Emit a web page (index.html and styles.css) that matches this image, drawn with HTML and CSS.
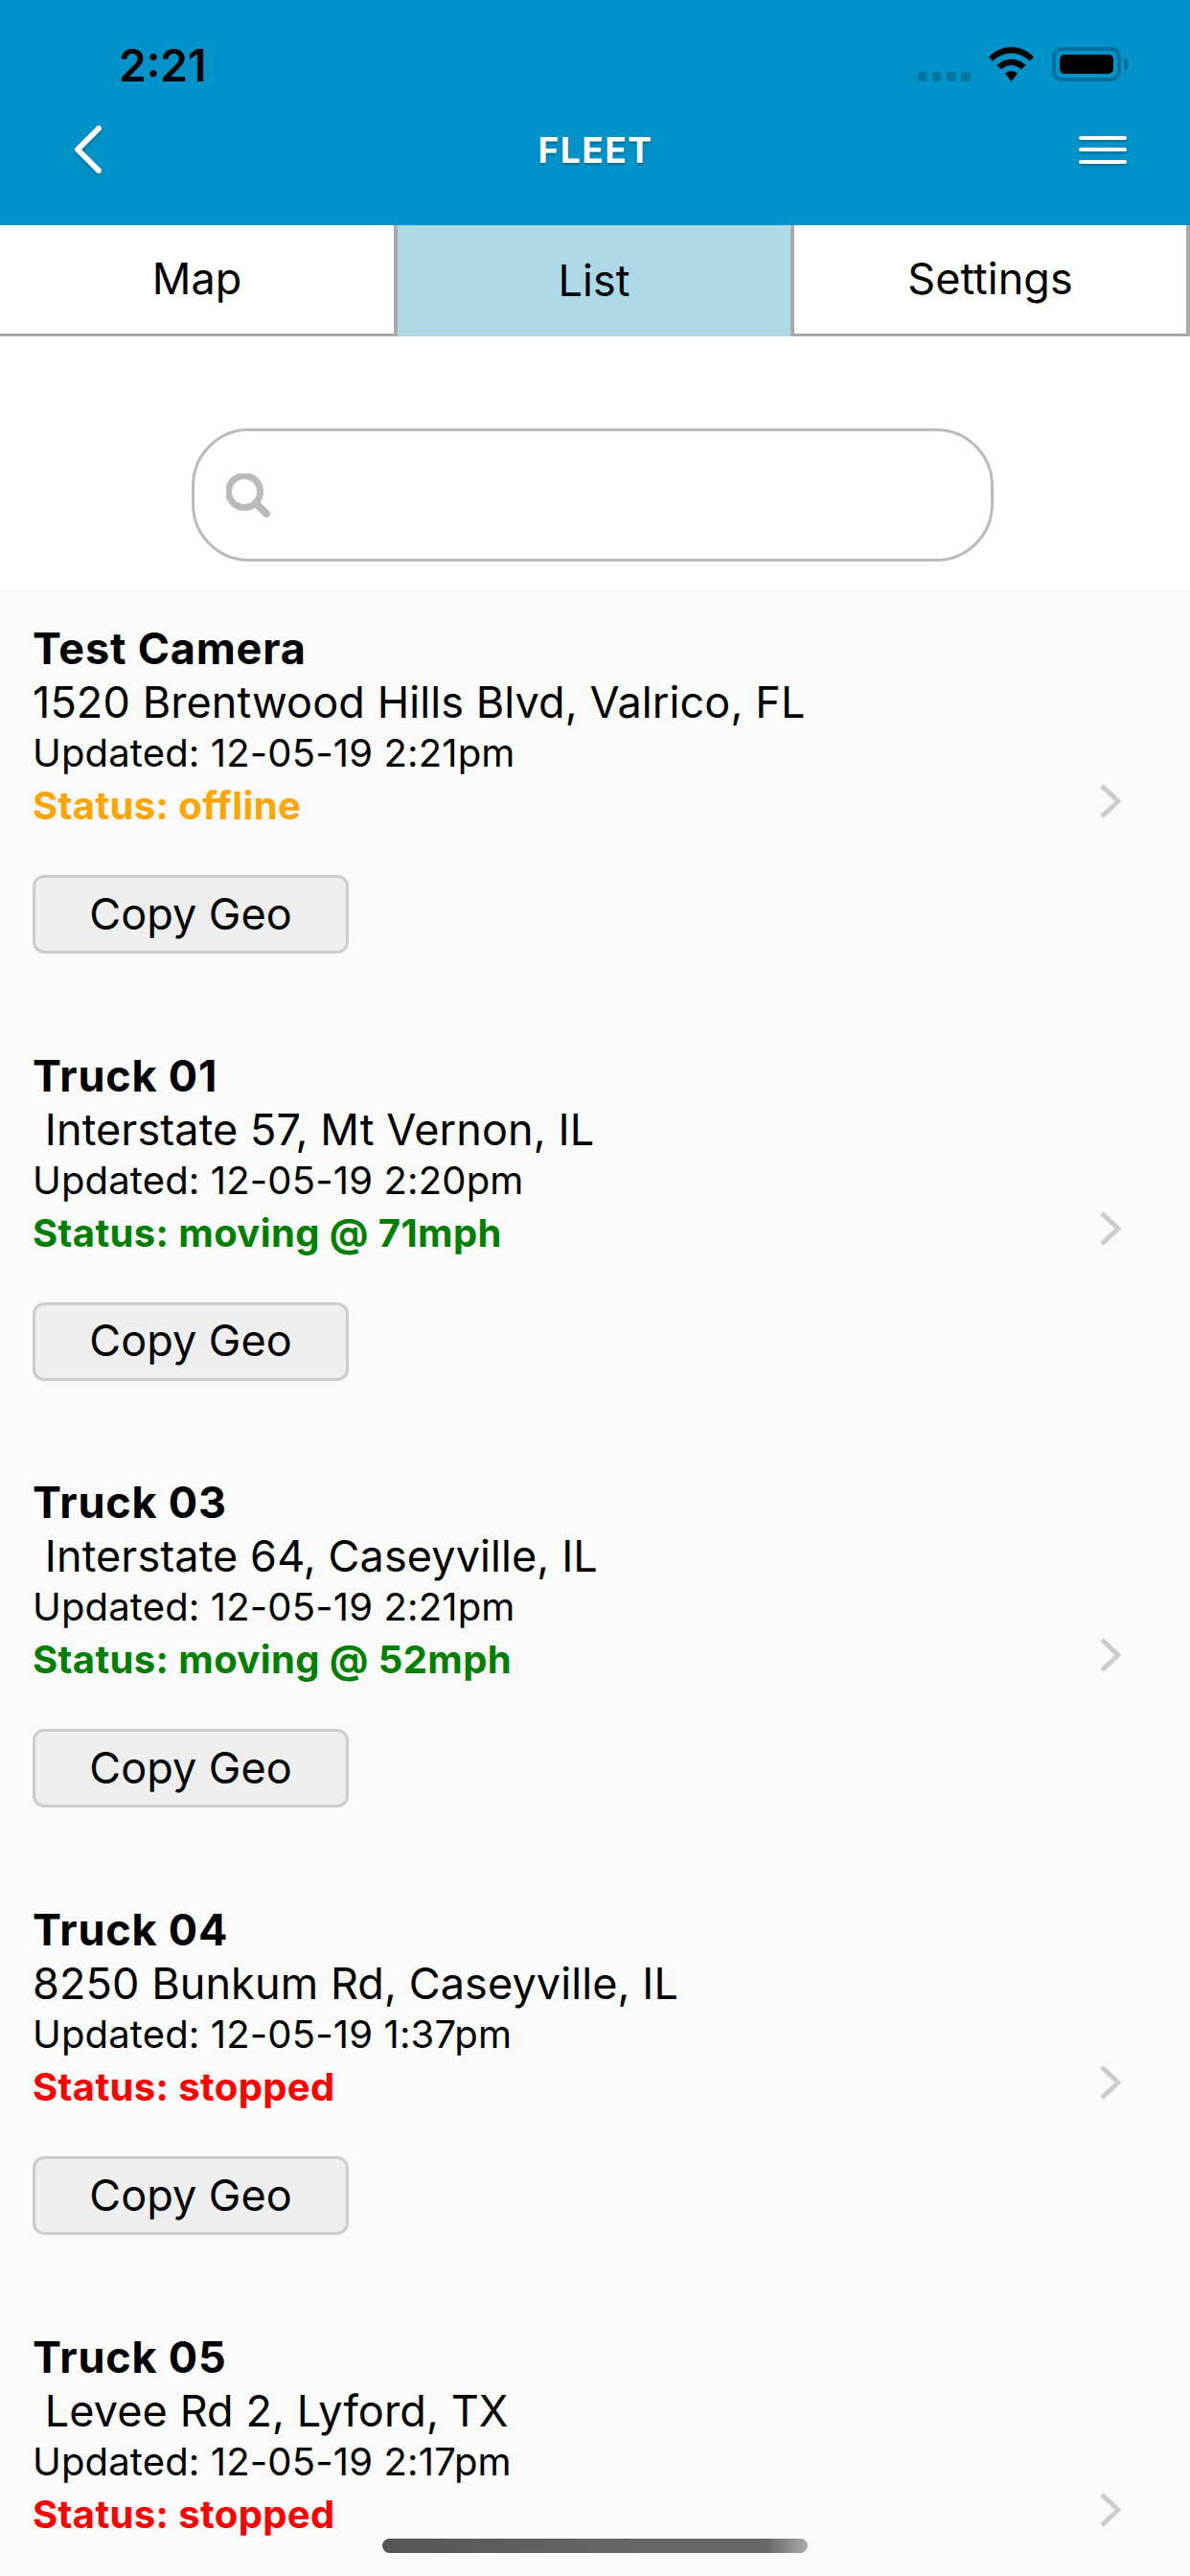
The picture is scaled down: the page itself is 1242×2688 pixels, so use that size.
FILE: index.html
```html
<!DOCTYPE html>
<html lang="en">
<head>
  <meta charset="UTF-8">
  <meta name="viewport" content="width=device-width, initial-scale=1.0">
  <title>Fleet</title>
  <link rel="stylesheet" href="styles.css">
</head>
<body>
  <div class="screen">
    <header class="header">
      <div class="status-bar">
        <span class="time">2:21</span>
        <div class="status-icons">
          <div class="signal"><i></i><i></i><i></i><i></i></div>
          <svg class="wifi" width="47" height="36" viewBox="0 0 47 36">
            <path d="M0 10.500C13.500 -3.500 33.500 -3.500 47 10.500L42.800 14.800C31.500 3.800 15.500 3.800 4.200 14.800Z"/>
            <path d="M8.500 19C17 10.500 30 10.500 38.500 19L34 23.500C27.500 17.500 19.500 17.500 13 23.500Z"/>
            <path d="M17 27.500C21 24.500 26 24.500 30 27.500L23.500 36Z"/>
          </svg>
          <div class="battery"><div class="battery-fill"></div></div>
          <div class="battery-nub"></div>
        </div>
      </div>
      <nav class="nav-bar">
        <svg class="back" width="34" height="52" viewBox="0 0 34 52">
          <path d="M28 4L6 26L28 48" fill="none" stroke="#fff" stroke-width="6" stroke-linecap="round" stroke-linejoin="round"/>
        </svg>
        <span class="nav-title">FLEET</span>
        <div class="menu"><i></i><i></i><i></i></div>
      </nav>
    </header>

    <div class="tabs">
      <div class="tab">Map</div>
      <div class="tab active">List</div>
      <div class="tab">Settings</div>
    </div>

    <div class="search-wrap">
      <div class="search">
        <svg width="48" height="48" viewBox="0 0 48 48">
          <circle cx="19" cy="19" r="16.500" fill="none" stroke="#bbb" stroke-width="7"/>
          <path d="M31 31L42 42" stroke="#bbb" stroke-width="8" stroke-linecap="round"/>
        </svg>
      </div>
    </div>

    <div class="list">
      <div class="item">
        <div class="info">
          <div class="name">Test Camera</div>
          <div class="address">1520 Brentwood Hills Blvd, Valrico, FL</div>
          <div class="updated">Updated: 12-05-19 2:21pm</div>
          <div class="state offline">Status: offline</div>
          <button class="copy">Copy Geo</button>
        </div>
        <svg class="chevron" width="24" height="36" viewBox="0 0 24 36"><path d="M3 2L20 18L3 34" fill="none" stroke="#ccc" stroke-width="5"/></svg>
      </div>
      <div class="item">
        <div class="info">
          <div class="name">Truck 01</div>
          <div class="address">&nbsp;Interstate 57, Mt Vernon, IL</div>
          <div class="updated">Updated: 12-05-19 2:20pm</div>
          <div class="state moving">Status: moving @ 71mph</div>
          <button class="copy">Copy Geo</button>
        </div>
        <svg class="chevron" width="24" height="36" viewBox="0 0 24 36"><path d="M3 2L20 18L3 34" fill="none" stroke="#ccc" stroke-width="5"/></svg>
      </div>
      <div class="item">
        <div class="info">
          <div class="name">Truck 03</div>
          <div class="address">&nbsp;Interstate 64, Caseyville, IL</div>
          <div class="updated">Updated: 12-05-19 2:21pm</div>
          <div class="state moving">Status: moving @ 52mph</div>
          <button class="copy">Copy Geo</button>
        </div>
        <svg class="chevron" width="24" height="36" viewBox="0 0 24 36"><path d="M3 2L20 18L3 34" fill="none" stroke="#ccc" stroke-width="5"/></svg>
      </div>
      <div class="item">
        <div class="info">
          <div class="name">Truck 04</div>
          <div class="address">8250 Bunkum Rd, Caseyville, IL</div>
          <div class="updated">Updated: 12-05-19 1:37pm</div>
          <div class="state stopped">Status: stopped</div>
          <button class="copy">Copy Geo</button>
        </div>
        <svg class="chevron" width="24" height="36" viewBox="0 0 24 36"><path d="M3 2L20 18L3 34" fill="none" stroke="#ccc" stroke-width="5"/></svg>
      </div>
      <div class="item">
        <div class="info">
          <div class="name">Truck 05</div>
          <div class="address">&nbsp;Levee Rd 2, Lyford, TX</div>
          <div class="updated">Updated: 12-05-19 2:17pm</div>
          <div class="state stopped">Status: stopped</div>
        </div>
        <svg class="chevron" width="24" height="36" viewBox="0 0 24 36"><path d="M3 2L20 18L3 34" fill="none" stroke="#ccc" stroke-width="5"/></svg>
      </div>
    </div>

    <div class="home-bar"></div>
  </div>
</body>
</html>
```

FILE: styles.css
```css
* {
  box-sizing: border-box;
}
body {
  margin: 0;
  font-family: Inter, "Liberation Sans", sans-serif;
  color: #000;
  background: #fff;
}
.screen {
  position: relative;
  width: 1242px;
  height: 2688px;
  overflow: hidden;
}

/* header */
.header {
  height: 235px;
  background: #0093c9;
}
.status-bar {
  height: 112px;
  padding: 44px 65px 0 124px;
  display: flex;
  justify-content: space-between;
  align-items: flex-start;
}
.time {
  font-size: 46px;
  line-height: 48px;
  font-weight: 600;
}
.status-icons {
  display: flex;
  align-items: flex-start;
  padding-top: 5px;
}
.signal {
  display: flex;
  gap: 5px;
  margin-top: 26px;
  margin-right: 19px;
}
.signal i {
  width: 10px;
  height: 10px;
  border-radius: 3px;
  background: #00759f;
}
.wifi {
  margin-right: 19px;
}
.battery {
  width: 72px;
  height: 36px;
  padding: 6px;
  border: 2px solid #006f99;
  border-radius: 10px;
  box-shadow: inset 0 0 0 2px #006f99;
}
.battery-fill {
  height: 100%;
  border-radius: 5px;
  background: #000;
}
.battery-nub {
  width: 4px;
  height: 12px;
  margin: 12px 0 0 3px;
  border-radius: 0 4px 4px 0;
  background: #006f99;
}
.nav-bar {
  padding: 0 66px 0 75px;
  display: flex;
  justify-content: space-between;
  align-items: center;
  height: 88px;
}
.back {
  filter: drop-shadow(0 2px 2px rgba(0,0,0,0.25));
}
.nav-title {
  margin-left: 8px;
  font-size: 37px;
  font-weight: 700;
  letter-spacing: 1.500px;
  color: #fff;
  text-shadow: 0 2px 3px rgba(0,0,0,0.3);
}
.menu {
  width: 50px;
  display: flex;
  flex-direction: column;
  gap: 8.500px;
}
.menu i {
  height: 4px;
  border-radius: 2px;
  background: #fff;
  box-shadow: 0 2px 3px rgba(0,0,0,0.25);
}

/* tabs */
.tabs {
  display: grid;
  grid-template-columns: 415px 414px 413px;
  height: 116px;
}
.tab {
  display: flex;
  align-items: center;
  justify-content: center;
  padding-bottom: 2px;
  font-size: 45px;
  border-right: 4px solid #aaa;
  border-bottom: 3px solid #aaa;
  background: #fff;
}
.tab.active {
  background: #add8e6;
  border-bottom: none;
}

/* search */
.search-wrap {
  height: 264px;
  padding: 96px 6px 0 0;
  display: flex;
  justify-content: center;
}
.search {
  width: 837px;
  height: 139px;
  padding: 44px 0 0 33px;
  border: 3px solid #bbb;
  border-radius: 60px;
  background: #fff;
}

/* list */
.list {
  background: #fafafa;
}
.item {
  height: 445.700px;
  padding: 34px 71px 0 34px;
  display: flex;
  justify-content: space-between;
}
.name {
  font-size: 45px;
  line-height: 56px;
  font-weight: 700;
  letter-spacing: 0.800px;
}
.address {
  font-size: 45px;
  line-height: 56px;
  letter-spacing: 0.100px;
}
.updated {
  margin-top: 1px;
  font-size: 40px;
  line-height: 48px;
  letter-spacing: 0.150px;
}
.state {
  font-size: 40px;
  line-height: 62px;
  font-weight: 700;
  letter-spacing: 0.400px;
}
.offline {
  color: #ffa500;
}
.moving {
  color: #008000;
}
.stopped {
  color: #f00;
}
.copy {
  display: block;
  width: 330px;
  height: 82px;
  margin-top: 41px;
  padding: 0 0 2px;
  font-family: inherit;
  font-size: 45px;
  color: #000;
  background: #eee;
  border: 3px solid #ccc;
  border-radius: 12px;
}
.chevron {
  margin-top: 169px;
}
.home-bar {
  position: absolute;
  left: 399px;
  top: 2649px;
  width: 444px;
  height: 15px;
  border-radius: 8px;
  background: linear-gradient(90deg, #555 0%, #666 60%, #666 90%, #aaa 100%);
}
```
